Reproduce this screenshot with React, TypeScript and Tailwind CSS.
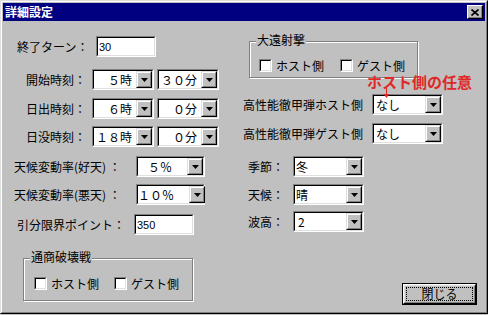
import React from 'react';

function Field({ className, children }: { className: string; children?: React.ReactNode }) {
  return (
    <div className={`h-[21px] shrink-0 border border-t-[#808080] border-l-[#808080] border-r-white border-b-white ${className}`}>
      <div className="h-full flex items-center bg-white border border-t-black border-l-black border-r-[#dfdfdf] border-b-[#dfdfdf]">
        {children}
      </div>
    </div>
  );
}

function DropButton() {
  return (
    <div className="w-[16px] h-full shrink-0 bg-[#c0c0c0] border border-t-[#dfdfdf] border-l-[#dfdfdf] border-r-black border-b-black">
      <div className="h-full flex items-center justify-center border border-t-white border-l-white border-r-[#808080] border-b-[#808080]">
        <svg width="7" height="4" viewBox="0 0 7 4">
          <path d="M0 0h7L3.5 4z" fill="#000" />
        </svg>
      </div>
    </div>
  );
}

function Combo({ className, text, textClass }: { className: string; text: string; textClass: string }) {
  return (
    <Field className={className}>
      <span className={`flex-1 whitespace-nowrap ${textClass}`}>{text}</span>
      <DropButton />
    </Field>
  );
}

function Check({ label, className }: { label: string; className: string }) {
  return (
    <div className={`flex items-center gap-[4px] ${className}`}>
      <div className="w-[13px] h-[13px] border border-t-[#808080] border-l-[#808080] border-r-white border-b-white">
        <div className="h-full bg-white border border-t-black border-l-black border-r-[#dfdfdf] border-b-[#dfdfdf]" />
      </div>
      <span className="leading-[13px]">{label}</span>
    </div>
  );
}

function GroupBox({ title, className, children }: { title: string; className: string; children: React.ReactNode }) {
  return (
    <div className={`relative border border-[#808080] shadow-[inset_1px_1px_0_#fff,1px_1px_0_#fff] ${className}`}>
      <span className="absolute -top-[9px] left-[6px] bg-[#c0c0c0] px-[1px] leading-[14px]">{title}</span>
      {children}
    </div>
  );
}

export default function App() {
  return (
    <div className="relative w-[488px] h-[315px] bg-[#c0c0c0] text-black text-[12px] leading-[14px] font-['Noto_Sans_CJK_JP',sans-serif]">
      {/* window frame */}
      <div className="w-[488px] h-[314px] border border-t-[#dfdfdf] border-l-[#dfdfdf] border-r-black border-b-black">
        <div className="h-full p-[1px] flex flex-col border border-t-white border-l-white border-r-[#808080] border-b-[#808080]">
          {/* title bar */}
          <div className="h-[18px] shrink-0 bg-[#000080] flex items-center justify-between px-[2px]">
            <span className="text-white font-bold">詳細設定</span>
            <div className="w-[16px] h-[14px] bg-[#c0c0c0] border border-t-white border-l-white border-r-black border-b-black">
              <div className="h-full flex items-center justify-center border border-t-[#c0c0c0] border-l-[#c0c0c0] border-r-[#808080] border-b-[#808080]">
                <svg width="8" height="7" viewBox="0 0 8 7">
                  <path d="M0.5 0.5L7.5 6.5M7.5 0.5L0.5 6.5" stroke="#000" strokeWidth="1.7" />
                </svg>
              </div>
            </div>
          </div>

          <div className="flex flex-1">
            {/* left column */}
            <div className="w-[240px] flex flex-col">
              <div className="flex items-center mt-[15px] ml-[14px]">
                <span className="w-[79px]">終了ターン：</span>
                <Field className="w-[60px]">
                  <span className="pl-[1px] font-['Liberation_Sans',sans-serif] text-[11px]">30</span>
                </Field>
              </div>
              <div className="flex items-center mt-[12px] ml-[23px]">
                <span className="w-[66px]">開始時刻：</span>
                <div className="flex gap-[3px]">
                  <Combo className="w-[62px]" text="５時" textClass="text-right pr-[4px]" />
                  <Combo className="w-[62px]" text="３０分" textClass="text-right pr-[4px]" />
                </div>
              </div>
              <div className="flex items-center mt-[8px] ml-[23px]">
                <span className="w-[66px]">日出時刻：</span>
                <div className="flex gap-[3px]">
                  <Combo className="w-[62px]" text="６時" textClass="text-right pr-[4px]" />
                  <Combo className="w-[62px]" text="０分" textClass="text-right pr-[4px]" />
                </div>
              </div>
              <div className="flex items-center mt-[7px] ml-[23px]">
                <span className="w-[66px]">日没時刻：</span>
                <div className="flex gap-[3px]">
                  <Combo className="w-[62px]" text="１８時" textClass="text-right pr-[4px]" />
                  <Combo className="w-[62px]" text="０分" textClass="text-right pr-[4px]" />
                </div>
              </div>
              <div className="flex items-center mt-[9px] ml-[11px]">
                <span className="w-[122px]">天候変動率(好天) ：</span>
                <Combo className="w-[69px]" text="５％" textClass="text-right pr-[15px]" />
              </div>
              <div className="flex items-center mt-[7px] ml-[11px]">
                <span className="w-[122px]">天候変動率(悪天) ：</span>
                <Combo className="w-[69px]" text="１０％" textClass="text-right pr-[15px]" />
              </div>
              <div className="flex items-center mt-[9px] ml-[14px]">
                <span className="w-[117px]">引分限界ポイント：</span>
                <Field className="w-[60px]">
                  <span className="pl-[1px] font-['Liberation_Sans',sans-serif] text-[11px]">350</span>
                </Field>
              </div>
              <GroupBox title="通商破壊戦" className="mt-[23px] ml-[20px] w-[170px] h-[43px]">
                <div className="flex items-center pt-[18px] pl-[10px]">
                  <Check label="ホスト側" className="w-[80px]" />
                  <Check label="ゲスト側" className="" />
                </div>
              </GroupBox>
            </div>

            {/* right column */}
            <div className="flex-1 flex flex-col">
              <GroupBox title="大遠射撃" className="mt-[20px] ml-[6px] w-[169px] h-[37px]">
                <div className="flex items-center pt-[17px] pl-[9px]">
                  <Check label="ホスト側" className="w-[81px]" />
                  <Check label="ゲスト側" className="" />
                </div>
              </GroupBox>
              <div className="flex items-center mt-[16px]">
                <span className="w-[129px]">高性能徹甲弾ホスト側</span>
                <Combo className="w-[71px]" text="なし" textClass="pl-[2px]" />
              </div>
              <div className="flex items-center mt-[8px]">
                <span className="w-[129px]">高性能徹甲弾ゲスト側</span>
                <Combo className="w-[71px]" text="なし" textClass="pl-[2px]" />
              </div>
              <div className="flex items-center mt-[12px] ml-[5px]">
                <span className="w-[45px]">季節：</span>
                <Combo className="w-[71px]" text="冬" textClass="pl-[1px]" />
              </div>
              <div className="flex items-center mt-[7px] ml-[5px]">
                <span className="w-[45px]">天候：</span>
                <Combo className="w-[71px]" text="晴" textClass="pl-[1px]" />
              </div>
              <div className="flex items-center mt-[6px] ml-[5px]">
                <span className="w-[45px]">波高：</span>
                <Combo className="w-[71px]" text="2" textClass="pl-[3px]" />
              </div>
              <button className="mt-[51px] ml-[159px] w-[75px] h-[22px] bg-[#c0c0c0] border border-black">
                <div className="h-full border border-t-white border-l-white border-r-black border-b-black">
                  <div className="h-full p-[1px] border border-t-[#dfdfdf] border-l-[#dfdfdf] border-r-[#808080] border-b-[#808080]">
                    <div className="h-full flex items-center justify-center border border-dotted border-black">閉じる</div>
                  </div>
                </div>
              </button>
            </div>
          </div>
        </div>
      </div>

      {/* red annotation */}
      <span className="absolute left-[367px] top-[74px] text-[15px] leading-[15px] font-bold text-[#e02828] whitespace-nowrap">ホスト側の任意</span>
      <svg className="absolute left-[382px] top-[88px]" width="9" height="11" viewBox="0 0 9 11">
        <path d="M4.5 0V8" stroke="#e02828" strokeWidth="1" />
        <path d="M1.5 6L4.5 10L7.5 6z" fill="#e02828" />
      </svg>
    </div>
  );
}
